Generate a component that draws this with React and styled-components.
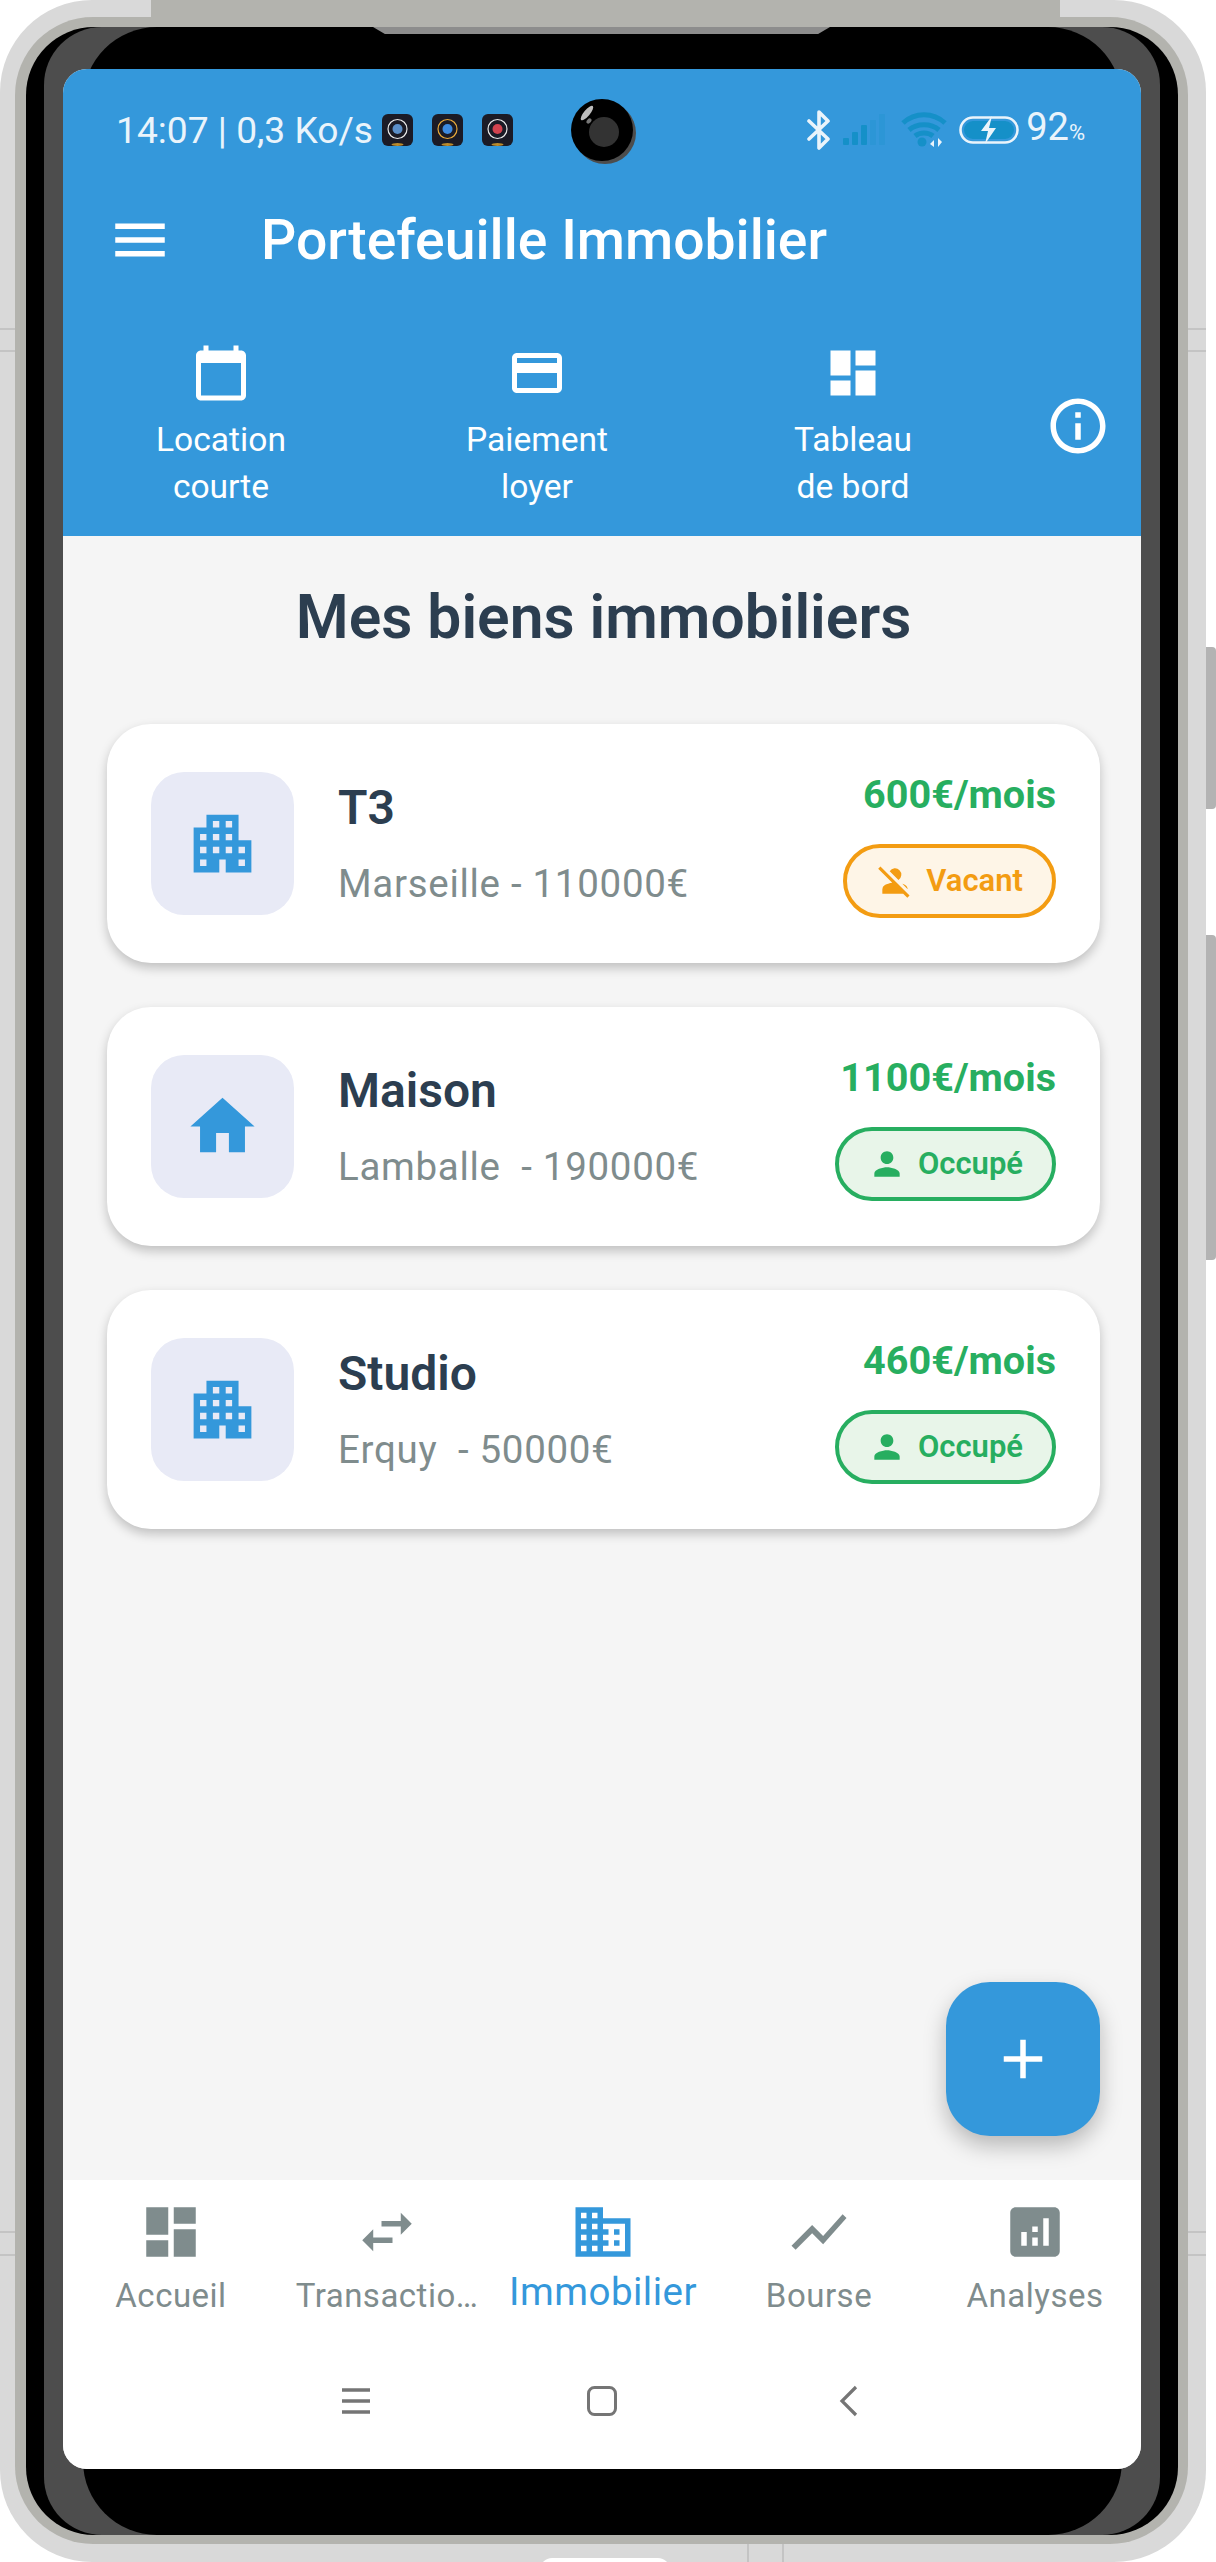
import styled, { createGlobalStyle } from "styled-components";
import {
  MdAdd,
  MdAnalytics,
  MdApartment,
  MdBusiness,
  MdCalendarToday,
  MdCreditCard,
  MdDashboard,
  MdHome,
  MdInfoOutline,
  MdMenu,
  MdPerson,
  MdPersonOff,
  MdShowChart,
  MdSwapHoriz,
} from "react-icons/md";

const BLUE = "#3498db";
const DARK = "#2c3e50";
const GREY = "#7f8c8d";
const GREEN = "#27ae60";
const ORANGE = "#f39c12";
const TEAL = "#1590c8";

const GlobalStyle = createGlobalStyle`
  html, body {
    margin: 0;
    padding: 0;
    background: #fff;
    font-family: Roboto, "Liberation Sans", sans-serif;
  }
  * {
    box-sizing: border-box;
  }
`;

const Page = styled.div`
  position: relative;
  width: 1216px;
  height: 2562px;
  overflow: hidden;
`;

const Shell = styled.div`
  width: 1206px;
  height: 2562px;
  padding: 17px 18px 18px 15px;
  background: #d9d9d9;
  border-radius: 92px;
  display: flex;
`;

const Rim = styled.div`
  flex: 1;
  padding: 10px 10px 9px 11px;
  background: #b3b3ae;
  border-radius: 78px;
  display: flex;
`;

const Bezel = styled.div`
  flex: 1;
  padding: 0 18px;
  background: #000;
  border-radius: 68px;
  display: flex;
`;

const Glass = styled.div`
  flex: 1;
  padding: 0 38px 0 39px;
  background: #4d4d4d;
  border-radius: 58px;
  display: flex;
`;

/* the black front is narrower than the screen, only its corners show */
const Front = styled.div`
  flex: 1;
  min-width: 0;
  padding: 42px 0 66px;
  background: #000;
  border-radius: 74px;
  display: flex;
`;

const Screen = styled.div`
  position: relative;
  flex: 1;
  margin: 0 -19px 0 -20px;
  display: flex;
  flex-direction: column;
  overflow: hidden;
  background: #f5f5f5;
  border-radius: 24px;
`;

/* hardware details on top of the phone body */
const TopStrip = styled.div`
  position: absolute;
  top: 0;
  left: 151px;
  width: 909px;
  height: 27px;
  background: #b3b3ae;
`;

const Notch = styled.div`
  position: absolute;
  top: 27px;
  left: 373px;
  width: 457px;
  height: 7px;
  background: #8d8d8d;
  clip-path: polygon(0 0, 100% 0, 97.4% 100%, 2.6% 100%);
`;

const SideKey = styled.div`
  position: absolute;
  left: 1206px;
  top: ${(p) => p.$top}px;
  width: 10px;
  height: ${(p) => p.$height}px;
  background: #b3b3b3;
  border-radius: 0 4px 4px 0;
`;

const HLine = styled.div`
  position: absolute;
  left: ${(p) => p.$left}px;
  top: ${(p) => p.$top}px;
  width: ${(p) => p.$width}px;
  height: 2px;
  background: #c4c4c4;
`;

const VLine = styled.div`
  position: absolute;
  left: ${(p) => p.$left}px;
  top: 2544px;
  width: 2px;
  height: 18px;
  background: #c4c4c4;
`;

const BottomBump = styled.div`
  position: absolute;
  left: 540px;
  top: 2558px;
  width: 130px;
  height: 12px;
  background: #fff;
  border-radius: 40px 40px 0 0;
`;

const Header = styled.header`
  height: 467px;
  flex-shrink: 0;
  background: ${BLUE};
  color: #fff;
`;

const StatusBar = styled.div`
  height: 122px;
  padding: 0 56px 0 53px;
  display: flex;
  align-items: center;
  justify-content: space-between;
  color: #eaf4fb;
`;

const StatusLeft = styled.div`
  display: flex;
  align-items: center;
  gap: 19px;
`;

const StatusTime = styled.span`
  margin-right: -10px;
  font-size: 37.2px;
  line-height: 44px;
`;

const StatusRight = styled.div`
  display: flex;
  align-items: center;
`;

const Battery = styled.span`
  margin-left: 7px;
  font-size: 38px;
  line-height: 44px;
  small {
    font-size: 22px;
  }
`;

const CameraHole = styled.svg`
  position: absolute;
  left: 508px;
  top: 29px;
`;

const AppBar = styled.div`
  height: 98px;
  padding-left: 44px;
  display: flex;
  align-items: center;
  gap: 88px;
`;

const AppTitle = styled.h1`
  margin: 2px 0 0;
  font-size: 55.3px;
  font-weight: 500;
  line-height: 66px;
`;

const Actions = styled.div`
  display: grid;
  grid-template-columns: 316px 316px 316px 1fr;
  padding-top: 54px;
`;

const ActionItem = styled.div`
  display: flex;
  flex-direction: column;
  align-items: center;
  gap: 13px;
  text-align: center;
  font-size: 33.6px;
  line-height: 47px;
`;

const InfoSlot = styled.div`
  display: flex;
  justify-content: center;
  padding: 50px 0 0 4px;
`;

const Content = styled.main`
  position: relative;
  flex: 1;
  padding: 49px 41px 0 44px;
`;

const Heading = styled.h2`
  margin: 0 0 73px;
  color: ${DARK};
  font-size: 60.5px;
  font-weight: 600;
  line-height: 66px;
  text-align: center;
`;

const CardList = styled.div`
  display: flex;
  flex-direction: column;
  gap: 44px;
`;

const Card = styled.article`
  height: 239px;
  padding: 0 44px;
  display: flex;
  align-items: center;
  gap: 44px;
  background: #fff;
  border-radius: 44px;
  box-shadow: 0 5px 11px rgba(0, 0, 0, 0.22);
`;

const IconBox = styled.div`
  width: 143px;
  height: 143px;
  flex-shrink: 0;
  display: flex;
  align-items: center;
  justify-content: center;
  background: #e8eaf6;
  border-radius: 33px;
  color: ${BLUE};
`;

const CardText = styled.div`
  flex: 1;
  padding-top: 5px;
  display: flex;
  flex-direction: column;
  gap: 20px;
`;

const CardName = styled.div`
  color: ${DARK};
  font-size: 48px;
  font-weight: 600;
  line-height: 56px;
`;

const CardInfo = styled.div`
  color: ${GREY};
  font-size: 38.5px;
  letter-spacing: 0.7px;
  line-height: 56px;
  white-space: pre;
`;

const CardSide = styled.div`
  padding-top: 1px;
  display: flex;
  flex-direction: column;
  align-items: flex-end;
  gap: 25px;
`;

const Rent = styled.div`
  color: ${GREEN};
  font-size: 39.6px;
  font-weight: 700;
  line-height: 48px;
`;

const Badge = styled.div`
  height: 74px;
  padding: 0 29px;
  display: flex;
  align-items: center;
  gap: 12px;
  border: 4px solid ${(p) => p.$color};
  border-radius: 37px;
  background: ${(p) => p.$bg};
  color: ${(p) => p.$color};
  font-size: 31px;
  font-weight: 600;
`;

const Fab = styled.button`
  position: absolute;
  right: 41px;
  bottom: 44px;
  width: 154px;
  height: 154px;
  padding: 0;
  display: flex;
  align-items: center;
  justify-content: center;
  border: none;
  border-radius: 44px;
  background: ${BLUE};
  color: #fff;
  box-shadow: 0 10px 22px rgba(0, 0, 0, 0.25);
`;

const BottomNav = styled.nav`
  height: 289px;
  flex-shrink: 0;
  background: #fff;
`;

const NavRow = styled.div`
  height: 164px;
  margin-right: -2px;
  padding-top: 19px;
  display: grid;
  grid-template-columns: repeat(5, 1fr);
`;

const NavItem = styled.div`
  display: flex;
  flex-direction: column;
  align-items: center;
  color: ${(p) => (p.$active ? BLUE : GREY)};
`;

const NavLabel = styled.span`
  margin-top: ${(p) => (p.$active ? 5 : 9)}px;
  font-size: ${(p) => (p.$active ? 38.5 : 33)}px;
  letter-spacing: 0.5px;
  line-height: 44px;
  white-space: nowrap;
`;

const SystemRow = styled.div`
  height: 114px;
  display: flex;
  align-items: center;
  justify-content: center;
  gap: 206px;
`;

const actions = [
  { icon: MdCalendarToday, lines: ["Location", "courte"] },
  { icon: MdCreditCard, lines: ["Paiement", "loyer"] },
  { icon: MdDashboard, lines: ["Tableau", "de bord"] },
];

const properties = [
  { name: "T3", info: "Marseille - 110000€", rent: "600€/mois", icon: MdApartment, occupied: false },
  { name: "Maison", info: "Lamballe  - 190000€", rent: "1100€/mois", icon: MdHome, occupied: true },
  { name: "Studio", info: "Erquy  - 50000€", rent: "460€/mois", icon: MdApartment, occupied: true },
];

const navItems = [
  { label: "Accueil", icon: MdDashboard },
  { label: "Transactio…", icon: MdSwapHoriz },
  { label: "Immobilier", icon: MdBusiness, active: true },
  { label: "Bourse", icon: MdShowChart },
  { label: "Analyses", icon: MdAnalytics },
];

const AppIcon = ({ ring, core }) => (
  <svg width="31" height="32" viewBox="0 0 31 32">
    <rect width="31" height="32" rx="6" fill="#1b1b26" />
    <ellipse cx="15.5" cy="30.5" rx="6" ry="1.5" fill="#b98a2c" />
    <circle cx="15.5" cy="15" r="9.5" fill="none" stroke={ring} strokeWidth="1.2" />
    <circle cx="15.5" cy="15" r="5" fill={core} />
  </svg>
);

const BluetoothIcon = () => (
  <svg width="26" height="40" viewBox="0 0 26 40">
    <path
      d="M3 11l19 18-9 9V2l9 9L3 29"
      fill="none"
      stroke="#eaf4fb"
      strokeWidth="3.6"
      strokeLinejoin="round"
      strokeLinecap="round"
    />
  </svg>
);

const SignalIcon = () => (
  <svg width="44" height="32" viewBox="0 0 44 32" style={{ marginLeft: 11 }}>
    <rect x="0" y="24" width="6" height="7" rx="1" fill={TEAL} />
    <rect x="9" y="18" width="6" height="13" rx="1" fill={TEAL} />
    <rect x="18" y="11" width="6" height="20" rx="1" fill={TEAL} />
    <rect x="27" y="6" width="6" height="25" rx="1" fill={TEAL} opacity="0.25" />
    <rect x="36" y="0" width="6" height="31" rx="1" fill={TEAL} opacity="0.25" />
  </svg>
);

const WifiIcon = () => (
  <svg width="46" height="36" viewBox="0 0 46 36" style={{ marginLeft: 14 }}>
    <g fill="none" stroke={TEAL} strokeWidth="5">
      <path d="M2 11c12-11 30-11 42 0" />
      <path d="M8 18c8-7 22-7 30 0" />
      <path d="M14 24c5-4 13-4 18 0" />
    </g>
    <circle cx="21" cy="30" r="4.5" fill={TEAL} />
    <path d="M33 35v-7l-4 4zM37 35v-9l4 4z" fill="#eaf4fb" />
  </svg>
);

const BatteryIcon = () => (
  <svg width="60" height="28" viewBox="0 0 60 28" style={{ marginLeft: 12 }}>
    <rect x="1.5" y="1.5" width="57" height="25" rx="12.5" fill="none" stroke="#eaf4fb" strokeWidth="2.6" />
    <rect x="5" y="5" width="50" height="18" rx="9" fill={TEAL} />
    <path d="M33 0L22 15h7l-3 13 11-16h-7z" fill="#eaf4fb" />
  </svg>
);

const Camera = () => (
  <CameraHole width="66" height="66" viewBox="0 0 66 66">
    <circle cx="34" cy="35" r="31" fill="#4d4d4d" />
    <circle cx="31" cy="32" r="31" fill="#000" />
    <circle cx="33" cy="34" r="15" fill="#333" />
    <ellipse cx="16" cy="15" rx="3" ry="9" transform="rotate(40 16 15)" fill="#bdbdbd" />
    <ellipse cx="18" cy="23" rx="2" ry="3" transform="rotate(40 18 23)" fill="#777" />
  </CameraHole>
);

const SystemMenu = () => (
  <svg width="40" height="40" viewBox="0 0 40 40">
    <path d="M6 9h28M6 20h28M6 31h28" stroke="#757575" strokeWidth="3.4" />
  </svg>
);

const SystemHome = () => (
  <svg width="40" height="40" viewBox="0 0 40 40">
    <rect x="6.5" y="6.5" width="27" height="27" rx="6" fill="none" stroke="#757575" strokeWidth="3" />
  </svg>
);

const SystemBack = () => (
  <svg width="40" height="40" viewBox="0 0 40 40">
    <path d="M28 6L14 20l14 14" fill="none" stroke="#757575" strokeWidth="3.2" />
  </svg>
);

const App = () => {
  return (
    <Page>
      <GlobalStyle />
      <Shell>
        <Rim>
          <Bezel>
            <Glass>
              <Front>
                <Screen>
                  <Header>
                    <StatusBar>
                      <StatusLeft>
                        <StatusTime>14:07 | 0,3 Ko/s</StatusTime>
                        <AppIcon ring="#e8e8e8" core="#5b8fc9" />
                        <AppIcon ring="#e8a93a" core="#3d8be0" />
                        <AppIcon ring="#e8e8e8" core="#d3434f" />
                      </StatusLeft>
                      <StatusRight>
                        <BluetoothIcon />
                        <SignalIcon />
                        <WifiIcon />
                        <BatteryIcon />
                        <Battery>
                          92<small>%</small>
                        </Battery>
                      </StatusRight>
                    </StatusBar>
                    <AppBar>
                      <MdMenu size={66} />
                      <AppTitle>Portefeuille Immobilier</AppTitle>
                    </AppBar>
                    <Actions>
                      {actions.map(({ icon: Icon, lines }) => (
                        <ActionItem key={lines[0]}>
                          <Icon size={60} />
                          <div>
                            {lines[0]}
                            <br />
                            {lines[1]}
                          </div>
                        </ActionItem>
                      ))}
                      <InfoSlot>
                        <MdInfoOutline size={66} />
                      </InfoSlot>
                    </Actions>
                  </Header>
                  <Content>
                    <Heading>Mes biens immobiliers</Heading>
                    <CardList>
                      {properties.map(({ name, info, rent, icon: Icon, occupied }) => (
                        <Card key={name}>
                          <IconBox>
                            <Icon size={77} />
                          </IconBox>
                          <CardText>
                            <CardName>{name}</CardName>
                            <CardInfo>{info}</CardInfo>
                          </CardText>
                          <CardSide>
                            <Rent>{rent}</Rent>
                            {occupied ? (
                              <Badge $color={GREEN} $bg="#e8f5e9">
                                <MdPerson size={38} />
                                Occupé
                              </Badge>
                            ) : (
                              <Badge $color={ORANGE} $bg="#fef5e7">
                                <MdPersonOff size={38} />
                                Vacant
                              </Badge>
                            )}
                          </CardSide>
                        </Card>
                      ))}
                    </CardList>
                    <Fab aria-label="Ajouter">
                      <MdAdd size={66} />
                    </Fab>
                  </Content>
                  <BottomNav>
                    <NavRow>
                      {navItems.map(({ label, icon: Icon, active }) => (
                        <NavItem key={label} $active={active}>
                          <Icon size={66} />
                          <NavLabel $active={active}>{label}</NavLabel>
                        </NavItem>
                      ))}
                    </NavRow>
                    <SystemRow>
                      <SystemMenu />
                      <SystemHome />
                      <SystemBack />
                    </SystemRow>
                  </BottomNav>
                  <Camera />
                </Screen>
              </Front>
            </Glass>
          </Bezel>
        </Rim>
      </Shell>
      <TopStrip />
      <Notch />
      <SideKey $top={647} $height={162} />
      <SideKey $top={935} $height={325} />
      <HLine $left={0} $top={328} $width={15} />
      <HLine $left={0} $top={350} $width={15} />
      <HLine $left={1188} $top={328} $width={18} />
      <HLine $left={1188} $top={350} $width={18} />
      <HLine $left={0} $top={2231} $width={15} />
      <HLine $left={0} $top={2254} $width={15} />
      <HLine $left={1188} $top={2231} $width={18} />
      <HLine $left={1188} $top={2254} $width={18} />
      <VLine $left={747} />
      <VLine $left={782} />
      <BottomBump />
    </Page>
  );
};

export default App;
